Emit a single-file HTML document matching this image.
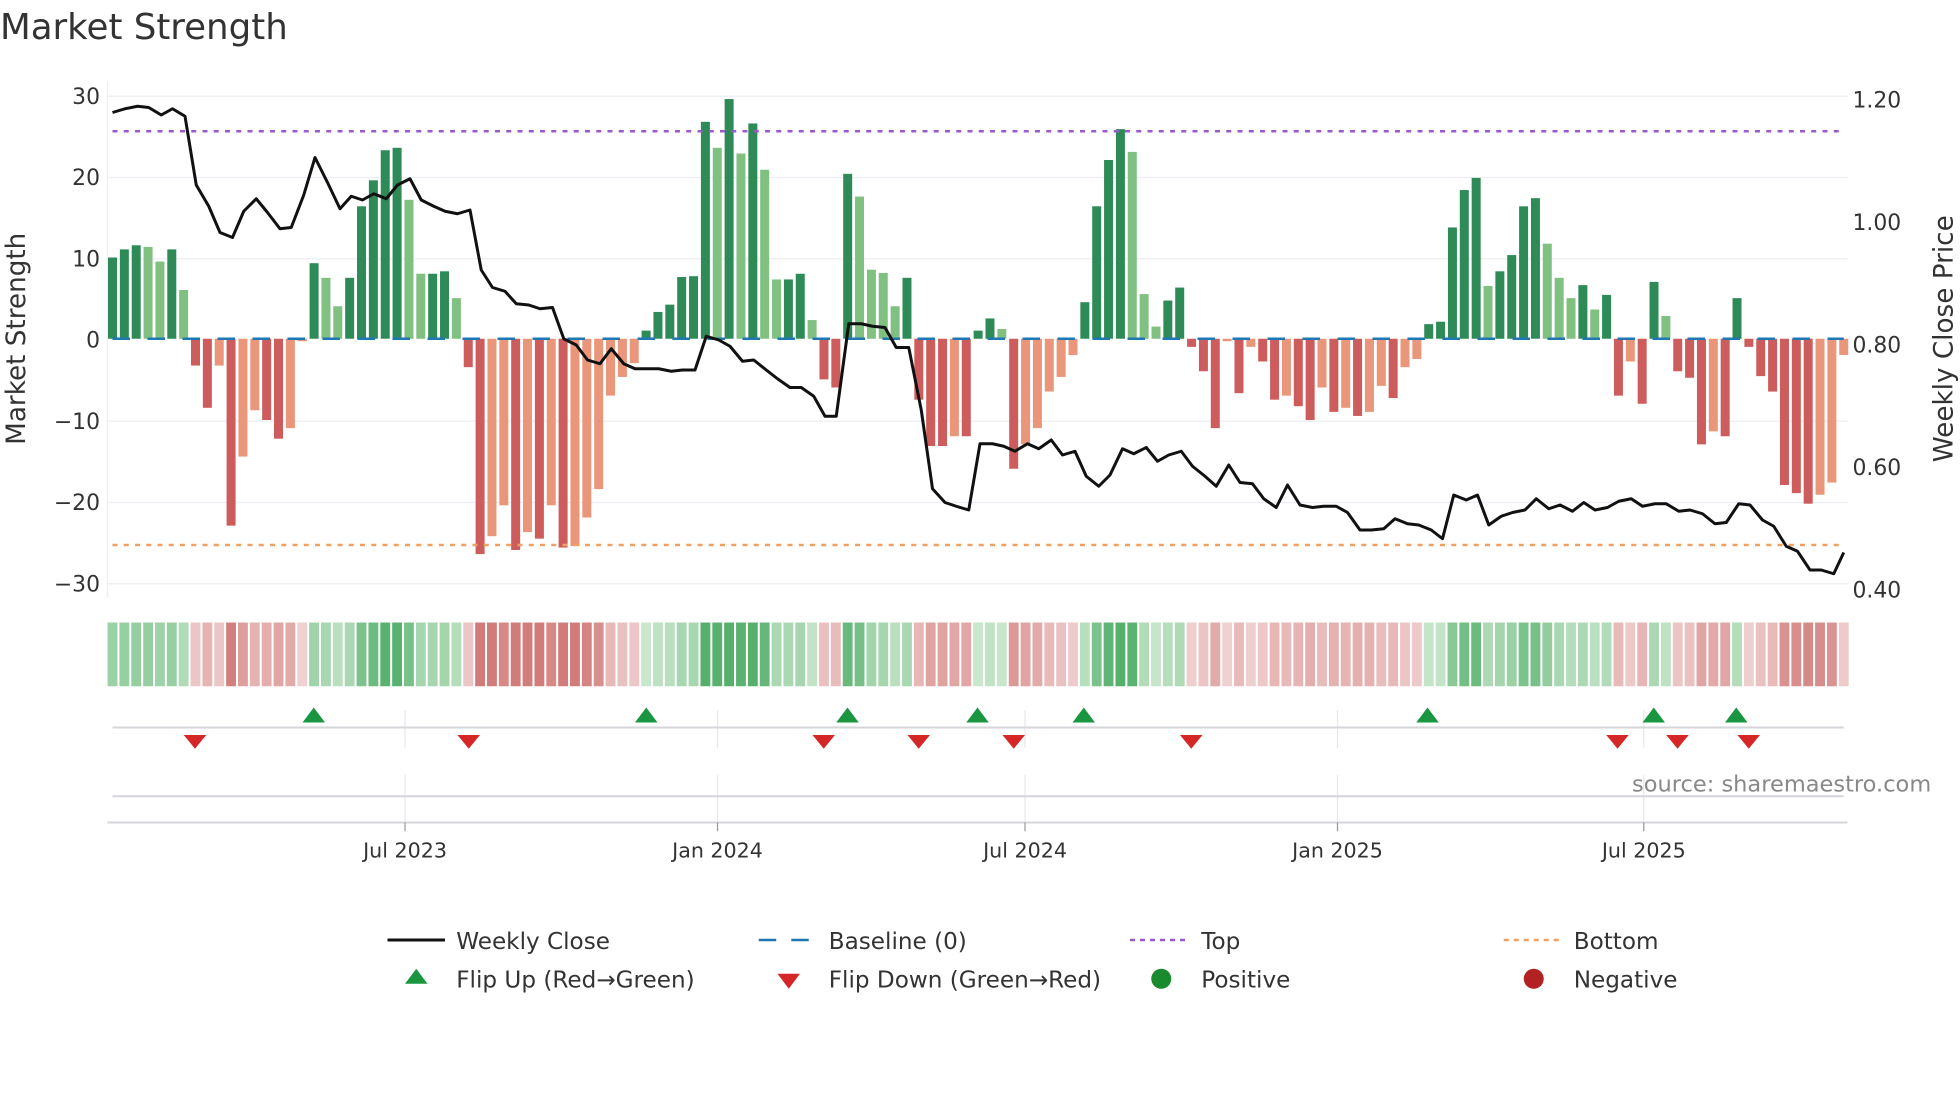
<!DOCTYPE html>
<html><head><meta charset="utf-8"><style>
html,body{margin:0;padding:0;background:#fff;width:1960px;height:1102px;overflow:hidden}
svg{display:block;font-family:"DejaVu Sans","Liberation Sans",sans-serif}
</style></head><body>
<svg id="s" width="1960" height="1102" viewBox="0 0 1568 881.6" preserveAspectRatio="none">
<text x="0" y="31" font-size="28.5" fill="#333">Market Strength</text>
<g stroke="#eceef3" stroke-width="1">
<line x1="86" y1="77" x2="1478" y2="77"/><line x1="86" y1="142" x2="1478" y2="142"/><line x1="86" y1="207" x2="1478" y2="207"/><line x1="86" y1="337" x2="1478" y2="337"/><line x1="86" y1="402" x2="1478" y2="402"/><line x1="86" y1="467" x2="1478" y2="467"/>
<line x1="86" y1="65" x2="86" y2="478"/>
</g>
<g font-size="17.5" fill="#333" text-anchor="end">
<text x="80" y="83">30</text><text x="80" y="148">20</text><text x="80" y="213">10</text><text x="80" y="278">0</text><text x="80" y="343">−10</text><text x="80" y="408">−20</text><text x="80" y="473">−30</text>
</g>
<g font-size="17.5" fill="#333">
<text x="1482" y="86">1.20</text><text x="1482" y="184">1.00</text><text x="1482" y="282">0.80</text><text x="1482" y="380">0.60</text><text x="1482" y="478">0.40</text>
</g>
<text transform="translate(20,271) rotate(-90)" font-size="21" fill="#333" text-anchor="middle">Market Strength</text>
<text transform="translate(1562,271) rotate(-90)" font-size="21" fill="#333" text-anchor="middle">Weekly Close Price</text>
<g id="bars"></g>
<line x1="90" y1="271" x2="1475" y2="271" stroke="#1f77b4" stroke-width="2" stroke-dasharray="14,14"/>
<line x1="90" y1="105" x2="1475" y2="105" stroke="#9b59d0" stroke-width="2" stroke-dasharray="4,5"/>
<line x1="90" y1="436" x2="1475" y2="436" stroke="#f0a060" stroke-width="2" stroke-dasharray="4,5"/>
<polyline id="pl" fill="none" stroke="#111" stroke-width="2.4" stroke-linejoin="round"/>
<g id="heat"></g>
<g stroke="#e6e8ec" stroke-width="1">
<line x1="324" y1="568" x2="324" y2="598"/><line x1="574" y1="568" x2="574" y2="598"/><line x1="820" y1="568" x2="820" y2="598"/><line x1="1070" y1="568" x2="1070" y2="598"/><line x1="1315" y1="568" x2="1315" y2="598"/>
<line x1="324" y1="620" x2="324" y2="658"/><line x1="574" y1="620" x2="574" y2="658"/><line x1="820" y1="620" x2="820" y2="658"/><line x1="1070" y1="620" x2="1070" y2="658"/><line x1="1315" y1="620" x2="1315" y2="658"/>
</g>
<line x1="90" y1="582" x2="1475" y2="582" stroke="#d4d6da" stroke-width="1.6"/>
<line x1="90" y1="637" x2="1475" y2="637" stroke="#d4d6da" stroke-width="1.6"/>
<line x1="86" y1="658" x2="1478" y2="658" stroke="#d4d6da" stroke-width="1.6"/>
<g stroke="#999" stroke-width="1"><line x1="324" y1="658" x2="324" y2="665"/><line x1="574" y1="658" x2="574" y2="665"/><line x1="820" y1="658" x2="820" y2="665"/><line x1="1070" y1="658" x2="1070" y2="665"/><line x1="1315" y1="658" x2="1315" y2="665"/></g>
<g id="marks"></g>
<g font-size="16.5" fill="#333" text-anchor="middle">
<text x="324" y="686">Jul 2023</text><text x="574" y="686">Jan 2024</text><text x="820" y="686">Jul 2024</text><text x="1070" y="686">Jan 2025</text><text x="1315" y="686">Jul 2025</text>
</g>
<text x="1545" y="633" font-size="18" fill="#888" text-anchor="end">source: sharemaestro.com</text>
<g font-size="18.5" fill="#333">
<line x1="310" y1="752" x2="356" y2="752" stroke="#111" stroke-width="2.4"/><text x="365" y="759">Weekly Close</text>
<line x1="607" y1="752" x2="651" y2="752" stroke="#1f77b4" stroke-width="2" stroke-dasharray="14,12"/><text x="663" y="759">Baseline (0)</text>
<line x1="904" y1="752" x2="950" y2="752" stroke="#9b59d0" stroke-width="2" stroke-dasharray="4,4"/><text x="961" y="759">Top</text>
<line x1="1203" y1="752" x2="1248" y2="752" stroke="#f0a060" stroke-width="2" stroke-dasharray="4,4"/><text x="1259" y="759">Bottom</text>
<polygon points="324,787 342,787 333,775" fill="#1a9641"/><text x="365" y="790">Flip Up (Red→Green)</text>
<polygon points="622,779 640,779 631,791" fill="#d62728"/><text x="663" y="790">Flip Down (Green→Red)</text>
<circle cx="929" cy="783" r="8" fill="#1a8a2e"/><text x="961" y="790">Positive</text>
<circle cx="1227" cy="783" r="8" fill="#b22222"/><text x="1259" y="790">Negative</text>
</g>
</svg>
<script>
var V=[10,11,11.5,11.3,9.5,11,6,-3.3,-8.5,-3.3,-23,-14.5,-8.8,-10,-12.3,-11,-0.3,9.3,7.5,4,7.5,16.3,19.5,23.2,23.5,17.1,8,8,8.3,5,-3.5,-26.5,-24.3,-20.5,-26,-23.8,-24.6,-20.5,-25.7,-25.5,-22,-18.5,-7,-4.7,-3,1,3.3,4.2,7.6,7.7,26.7,23.5,29.5,22.8,26.5,20.8,7.3,7.3,8,2.3,-5,-6,20.3,17.5,8.5,8.1,4,7.5,-7.5,-13.2,-13.2,-12,-12,1,2.5,1.2,-16,-13,-11,-6.5,-4.7,-2,4.5,16.3,22,25.8,23,5.5,1.5,4.7,6.3,-1,-4,-11,-0.3,-6.7,-1,-2.8,-7.5,-7,-8.3,-10,-6,-9,-8.5,-9.5,-9,-5.8,-7.3,-3.5,-2.5,1.8,2.1,13.7,18.3,19.8,6.5,8.3,10.3,16.3,17.3,11.7,7.5,5,6.6,3.6,5.4,-7,-2.8,-8,7,2.8,-4,-4.8,-13,-11.4,-12,5,-1,-4.6,-6.5,-18,-19,-20.3,-19.2,-17.7,-2];
var ns="http://www.w3.org/2000/svg",n=V.length,x0=90,dx=(1475-90)/(n-1);
var b=document.getElementById("bars"),h=document.getElementById("heat");
function el(p,t,a){var e=document.createElementNS(ns,t);for(var k in a)e.setAttribute(k,a[k]);p.appendChild(e);}
function mix(a,c,t){return "rgb("+a.map(function(v,i){return Math.round(v+(c[i]-v)*t)}).join(",")+")";}
for(var i=0;i<n;i++){var v=V[i],p=i?V[i-1]:0,x=x0+i*dx,c;
 if(v>=0)c=(v>=p)?"#2e8b57":"#80c080";else c=(v<=p)?"#cd5c5c":"#e9967a";
 var y=271-v*6.5;el(b,"rect",{x:x-3.6,y:Math.min(y,271),width:7.2,height:Math.abs(v*6.5),fill:c});
 var t=Math.min(1,Math.abs(v)/24)*0.7+0.1;
 var col=v>=0?mix([222,241,222],[52,160,80],t):mix([245,222,222],[200,100,98],t);
 el(h,"rect",{x:x-dx/2+0.8,y:498,width:dx-1.6,height:51,fill:col});}
var P=[[90,90],[100,87],[110,85],[119,86],[129,92],[138,87],[148,93],[157,148],[167,165],[176,186],[186,190],[195,169],[205,159],[214,170],[224,183],[233,182],[243,156],[252,126],[262,146],[272,167],[281,157],[290,160],[299,155],[309,159],[318,148],[328,143],[337,160],[347,165],[356,169],[366,171],[376,168],[385,216],[394,230],[404,233],[413,243],[423,244],[432,247],[442,246],[451,271],[461,276],[470,288],[480,291],[489,279],[499,291],[508,295],[518,295],[527,295],[537,297],[546,296],[556,296],[565,269],[575,272],[584,277],[594,289],[603,288],[613,296],[622,303],[632,310],[641,310],[651,317],[660,333],[669,333],[679,259],[689,259],[698,261],[708,262],[717,278],[727,278],[737,328],[746,391],[756,402],[765,405],[775,408],[784,355],[794,355],[803,357],[812,361],[822,355],[831,359],[841,352],[850,364],[860,361],[869,381],[879,389],[888,380],[898,359],[907,363],[917,358],[926,369],[935,364],[945,361],[954,373],[964,381],[973,389],[983,372],[992,386],[1002,387],[1011,399],[1021,406],[1030,388],[1040,404],[1050,406],[1059,405],[1069,405],[1078,410],[1088,424],[1097,424],[1107,423],[1116,415],[1126,419],[1135,420],[1145,424],[1154,431],[1163,396],[1173,400],[1182,396],[1191,420],[1201,413],[1210,410],[1220,408],[1229,399],[1239,407],[1248,404],[1258,409],[1267,402],[1276,408],[1286,406],[1295,401],[1305,399],[1314,405],[1324,403],[1333,403],[1343,409],[1352,408],[1362,411],[1372,419],[1381,418],[1391,403],[1400,404],[1410,416],[1419,421],[1429,437],[1438,441],[1448,456],[1457,456],[1467,459],[1475,442]];
document.getElementById("pl").setAttribute("points",P.map(function(q){return q.join(",")}).join(" "));
var m=document.getElementById("marks");
[251,517,678,782,867,1142,1323,1389].forEach(function(x){el(m,"polygon",{points:(x-9)+",578 "+(x+9)+",578 "+x+",566",fill:"#1a9641"});});
[156,375,659,735,811,953,1294,1342,1399].forEach(function(x){el(m,"polygon",{points:(x-9)+",588 "+(x+9)+",588 "+x+",599",fill:"#d62728"});});
</script>
</body></html>
